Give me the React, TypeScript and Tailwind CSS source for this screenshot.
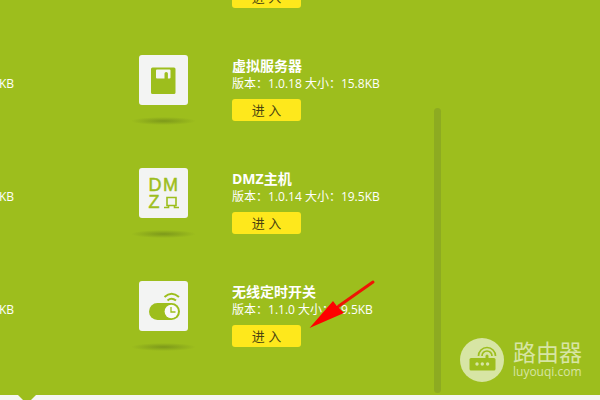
import type { ReactNode } from "react";

type App = {
  name: string;
  version: string;
  size: string;
  icon: ReactNode;
  highlighted?: boolean;
};

function DiskIcon() {
  return (
    <svg viewBox="0 0 49 50" className="h-full w-full" aria-hidden="true">
      <path
        fill="#9dbe1d"
        fillRule="evenodd"
        d="M13.500 12.500h21.500a1.500 1.500 0 0 1 1.500 1.500v23.500a1.500 1.500 0 0 1-1.500 1.500h-21.500a1.500 1.500 0 0 1-1.500-1.500V14a1.500 1.500 0 0 1 1.500-1.500zM18 14.500a1 1 0 0 0-1 1v7a1 1 0 0 0 1 1h7.500v-5q0-1.500 1.700-1.500t1.700 1.500v5h1.600a1 1 0 0 0 1-1v-7a1 1 0 0 0-1-1z"
      />
    </svg>
  );
}

function DmzIcon() {
  return (
    <svg viewBox="0 0 49 50" className="h-full w-full" aria-hidden="true">
      <g
        fill="#9dbe1d"
        stroke="#9dbe1d"
        strokeWidth="0.5"
        fontFamily="'Liberation Sans', sans-serif"
        fontSize="18"
      >
        <text x="9.500" y="23">D</text>
        <text x="24" y="23">M</text>
        <text x="9.500" y="40">Z</text>
      </g>
      <g fill="none" stroke="#9dbe1d" strokeWidth="1.600">
        <path d="M28 29.500h9v8h-9z" />
        <path d="M25 39.500h4.500v-2M40 39.500h-4.500v-2" />
      </g>
    </svg>
  );
}

function TimerSwitchIcon() {
  return (
    <svg viewBox="0 0 49 50" className="h-full w-full" aria-hidden="true">
      <rect x="10" y="22" width="31" height="17" rx="8.500" fill="#9dbe1d" />
      <circle cx="32.300" cy="30.500" r="6.700" fill="#fafafa" />
      <g fill="none" stroke="#9dbe1d">
        <path d="M32 26v5h4.500" strokeWidth="1.300" />
        <path d="M25.500 16q7-6.500 14.500 0" strokeWidth="2" />
        <path d="M28.500 19.500q4-3.500 8.500 0" strokeWidth="2" />
      </g>
    </svg>
  );
}

const apps: App[] = [
  { name: "虚拟服务器", version: "1.0.18", size: "15.8KB", icon: <DiskIcon /> },
  { name: "DMZ主机", version: "1.0.14", size: "19.5KB", icon: <DmzIcon /> },
  {
    name: "无线定时开关",
    version: "1.1.0",
    size: "19.5KB",
    icon: <TimerSwitchIcon />,
    highlighted: true,
  },
];

function EnterButton() {
  return (
    <button
      type="button"
      className="block h-[22px] w-[69px] rounded-[3px] bg-[#fee81c] text-[13px] leading-[22px] text-[#4a4410]"
    >
      进 入
    </button>
  );
}

function Arrow() {
  return (
    <svg
      viewBox="0 0 68 50"
      className="pointer-events-none absolute top-[-2px] left-[76px] h-[50px] w-[68px]"
      aria-hidden="true"
    >
      <path d="M65 3L28 29" stroke="#ee1505" strokeWidth="3" strokeLinecap="round" />
      <path d="M1.500 49L25 22l3 4 8 8z" fill="#fe0000" />
    </svg>
  );
}

function AppItem({ app }: { app: App }) {
  return (
    <li className="flex h-[113px] shrink-0">
      <div className="w-[49px]">
        <div className="h-[50px] rounded-[3px] bg-[#f3f4f3]">{app.icon}</div>
        <div className="-mx-2 mt-3 h-2 bg-[radial-gradient(closest-side,#7d991a,#9dbe1d00)]" />
      </div>
      <div className="relative ml-11 pt-px">
        <h2 className="text-sm leading-5 font-bold">{app.name}</h2>
        <p className="mb-[7px] text-xs leading-4 whitespace-nowrap">
          版本：{app.version} 大小：{app.size}
        </p>
        <EnterButton />
        {app.highlighted && <Arrow />}
      </div>
    </li>
  );
}

function Watermark() {
  return (
    <div className="absolute right-[17px] bottom-[18px] flex items-center gap-[9px] text-[#d7e5a4]">
      <svg viewBox="0 0 44 44" className="h-11 w-11" aria-hidden="true">
        <circle cx="22" cy="22" r="22" fill="#d7e5a4" />
        <rect x="9.500" y="20" width="26" height="12.500" rx="1.500" fill="#9dbe1d" />
        <g fill="none" stroke="#9dbe1d" strokeWidth="1.700">
          <path d="M18.500 18a8.500 8.500 0 0 1 17 0" />
          <path d="M22 18a5 5 0 0 1 10 0" />
        </g>
        <path d="M25.500 20v-2a1.500 1.500 0 0 1 3 0v2z" fill="#9dbe1d" />
        <g fill="#d7e5a4">
          <circle cx="17" cy="26" r="1.700" />
          <circle cx="22.300" cy="26" r="1.700" />
          <circle cx="27.600" cy="26" r="1.700" />
        </g>
      </svg>
      <div className="w-[70px]">
        <div className="text-[23px] leading-6">路由器</div>
        <div className="text-xs leading-4">luyouqi.com</div>
      </div>
    </div>
  );
}

export default function App() {
  return (
    <div className="relative flex h-screen flex-col overflow-hidden bg-[#f5f6f4] font-['Open_Sans','Noto_Sans_CJK_SC',sans-serif] text-white">
      <main className="flex min-h-0 flex-1 bg-[#9dbe1d]">
        {/* tail of the previous column */}
        <ul className="flex w-[139px] flex-col justify-end pb-px">
          {apps.map((app) => (
            <li
              key={app.name}
              className="flex h-[113px] w-[14px] shrink-0 justify-end pt-[21px] text-xs leading-4"
            >
              KB
            </li>
          ))}
        </ul>

        <ul className="flex w-[295px] flex-col justify-end pb-px">
          <li className="flex h-[113px] shrink-0 pt-11 pl-[93px]">
            <EnterButton />
          </li>
          {apps.map((app) => (
            <AppItem key={app.name} app={app} />
          ))}
        </ul>

        <div className="mt-[108px] mb-[2px] w-[7px] rounded-full bg-[#8dab21]" />
      </main>

      <footer className="h-[5px]">
        <div className="ml-[18px] h-[9px] w-[18px] bg-[#9dbe1d] [clip-path:polygon(0_0,100%_0,50%_100%)]" />
      </footer>

      <Watermark />
    </div>
  );
}
